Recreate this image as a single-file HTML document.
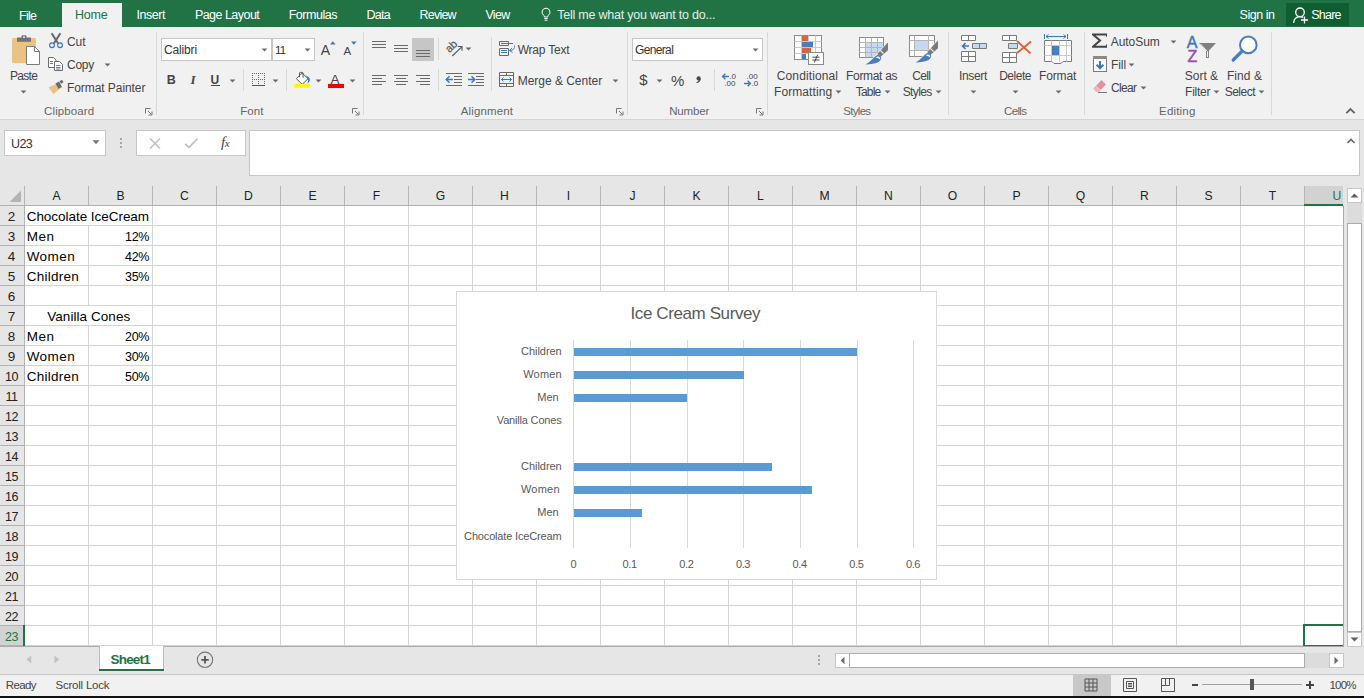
<!DOCTYPE html>
<html><head><meta charset="utf-8"><title>Excel</title>
<style>
*{box-sizing:border-box;margin:0;padding:0}
html,body{width:1364px;height:698px;overflow:hidden;background:#e6e6e6;font-family:"Liberation Sans",sans-serif;font-size:12px;color:#444}
.a{position:absolute}
.t{position:absolute;white-space:nowrap;line-height:14px;font-size:12px;color:#444}
#top{left:0;top:0;width:1364px;height:27px;background:#217346}
#top .t{color:#fff;font-size:12.5px;top:8px}
#ribbon{left:0;top:27px;width:1364px;height:92px;background:#f1f1f1}
#ribline{left:0;top:119px;width:1364px;height:1px;background:#d4d4d4}
.sep{position:absolute;top:32px;width:1px;height:83px;background:#d8d8d8}
.gl{position:absolute;top:104px;font-size:11.5px;color:#666;white-space:nowrap;line-height:14px}
.hc{position:absolute;top:186px;height:19px;line-height:19px;text-align:center;font-size:13.5px;color:#222;white-space:nowrap;transform:scaleX(.9)}
.rn{position:absolute;left:0;width:23px;height:20px;line-height:22px;text-align:center;font-size:13.5px;color:#222}
.c{position:absolute;font-size:13.5px;color:#000;white-space:nowrap;line-height:20px;height:20px}
.ax{position:absolute;font-size:11.5px;color:#595959;white-space:nowrap;line-height:14px}
.dd{position:absolute;width:0;height:0;border-left:3px solid transparent;border-right:3px solid transparent;border-top:3px solid #666}
</style></head><body>

<div class="a" id="top">
<div class="a" style="left:62px;top:3px;width:60px;height:24px;background:#f1f1f1"></div>
<div class="a" style="left:1286px;top:3px;width:63px;height:23px;background:#0f5d31"></div>
</div>
<div class="a" id="ribbon"></div><div class="a" id="ribline"></div>
<div class="sep" style="left:156px"></div>
<div class="sep" style="left:363px"></div>
<div class="sep" style="left:627px"></div>
<div class="sep" style="left:767px"></div>
<div class="sep" style="left:948px"></div>
<div class="sep" style="left:1084px"></div>
<div class="sep" style="left:1271px"></div>
<div class="t" style="left:44.1px;top:103px;font-size:11.5px;line-height:16px;letter-spacing:0.11px;color:#666;font-weight:normal;font-style:normal;">Clipboard</div>
<div class="t" style="left:240.3px;top:103px;font-size:11.5px;line-height:16px;letter-spacing:0.03px;color:#666;font-weight:normal;font-style:normal;">Font</div>
<div class="t" style="left:460.7px;top:103px;font-size:11.5px;line-height:16px;letter-spacing:0.14px;color:#666;font-weight:normal;font-style:normal;">Alignment</div>
<div class="t" style="left:669.2px;top:103px;font-size:11.5px;line-height:16px;letter-spacing:-0.14px;color:#666;font-weight:normal;font-style:normal;">Number</div>
<div class="t" style="left:843.2px;top:103px;font-size:11.5px;line-height:16px;letter-spacing:-0.68px;color:#666;font-weight:normal;font-style:normal;">Styles</div>
<div class="t" style="left:1004.1px;top:103px;font-size:11.5px;line-height:16px;letter-spacing:-0.69px;color:#666;font-weight:normal;font-style:normal;">Cells</div>
<div class="t" style="left:1159.1px;top:103px;font-size:11.5px;line-height:16px;letter-spacing:0.17px;color:#666;font-weight:normal;font-style:normal;">Editing</div>
<div class="t" style="left:19.0px;top:8px;font-size:12.5px;line-height:16px;letter-spacing:-0.75px;color:#fff;font-weight:normal;font-style:normal;">File</div>
<div class="t" style="left:75.0px;top:7px;font-size:12.5px;line-height:16px;letter-spacing:-0.21px;color:#217346;font-weight:normal;font-style:normal;">Home</div>
<div class="t" style="left:136.6px;top:7px;font-size:12.5px;line-height:16px;letter-spacing:-0.49px;color:#fff;font-weight:normal;font-style:normal;">Insert</div>
<div class="t" style="left:194.9px;top:7px;font-size:12.5px;line-height:16px;letter-spacing:-0.53px;color:#fff;font-weight:normal;font-style:normal;">Page Layout</div>
<div class="t" style="left:288.7px;top:7px;font-size:12.5px;line-height:16px;letter-spacing:-0.46px;color:#fff;font-weight:normal;font-style:normal;">Formulas</div>
<div class="t" style="left:366.6px;top:7px;font-size:12.5px;line-height:16px;letter-spacing:-0.80px;color:#fff;font-weight:normal;font-style:normal;">Data</div>
<div class="t" style="left:419.6px;top:7px;font-size:12.5px;line-height:16px;letter-spacing:-0.80px;color:#fff;font-weight:normal;font-style:normal;">Review</div>
<div class="t" style="left:485.4px;top:7px;font-size:12.5px;line-height:16px;letter-spacing:-0.66px;color:#fff;font-weight:normal;font-style:normal;">View</div>
<div class="t" style="left:557.2px;top:7px;font-size:12.5px;line-height:16px;letter-spacing:-0.22px;color:#e3efe8;font-weight:normal;font-style:normal;">Tell me what you want to do...</div>
<div class="t" style="left:1239.5px;top:7px;font-size:12.5px;line-height:16px;letter-spacing:-0.45px;color:#fff;font-weight:normal;font-style:normal;">Sign in</div>
<div class="t" style="left:1311.3px;top:7px;font-size:12.5px;line-height:16px;letter-spacing:-0.80px;color:#fff;font-weight:normal;font-style:normal;">Share</div>
<svg class="a" style="left:540px;top:7px" width="12" height="15" viewBox="0 0 12 15"><path d="M6 1.2a3.9 3.9 0 0 0-2.3 7.1c.5.5.7 1 .7 1.7h3.2c0-.7.2-1.2.7-1.7A3.9 3.9 0 0 0 6 1.200Z" fill="none" stroke="#fff" stroke-width="1"/><path d="M4.3 11.5h3.4M4.6 13.2h2.800" stroke="#fff" stroke-width="1"/></svg>
<svg class="a" style="left:1292px;top:5px" width="18" height="19" viewBox="0 0 18 19"><circle cx="8" cy="7.300" r="4.300" fill="none" stroke="#fff" stroke-width="1.300"/><path d="M1.600 18c.3-3.800 2.600-6.200 6.200-6.400c1.300 0 2.400.2 3.400.8" fill="none" stroke="#fff" stroke-width="1.300"/><path d="M12.500 11.500v7M9 15h7" stroke="#fff" stroke-width="1.300"/></svg>
<svg class="a" style="left:10px;top:33px" width="32" height="34" viewBox="0 0 32 34"><rect x="2" y="5" width="24" height="25" rx="1.5" fill="#eac282"/><path d="M7 4.500h4.500v-1.300a1 1 0 0 1 1-1h3a1 1 0 0 1 1 1v1.300H21v4.300H7Z" fill="#737373"/><rect x="13" y="3.400" width="2" height="1.300" fill="#f1f1f1"/><path d="M16.500 13.500h8l5 5v13h-13Z" fill="#fff" stroke="#7a7a7a" stroke-width="1"/><path d="M24.500 13.500v5h5" fill="none" stroke="#7a7a7a" stroke-width="1"/></svg>
<div class="t" style="left:10.0px;top:68px;font-size:12px;line-height:16px;letter-spacing:-0.72px;color:#444;font-weight:normal;font-style:normal;">Paste</div>
<svg class="a" style="left:20.0px;top:89.7px" width="7" height="4" viewBox="0 0 7 4"><path d="M0.600 0.400H6.400L3.500 3.500Z" fill="#6a6a6a"/></svg>
<svg class="a" style="left:48px;top:32px" width="16" height="17" viewBox="0 0 16 17"><path d="M3.600 1.200L10 11.200M12.400 1.200L6 11.200" stroke="#666" stroke-width="2" fill="none"/><circle cx="4" cy="13.200" r="2.400" fill="none" stroke="#3c78c0" stroke-width="1.200"/><circle cx="12" cy="13.200" r="2.400" fill="none" stroke="#3c78c0" stroke-width="1.200"/></svg>
<div class="t" style="left:67.0px;top:34px;font-size:12px;line-height:16px;letter-spacing:-0.09px;color:#444;font-weight:normal;font-style:normal;">Cut</div>
<svg class="a" style="left:47px;top:56px" width="17" height="16" viewBox="0 0 17 16"><path d="M1.500 1.500h5l2.500 2.500v7.500h-7.500Z" fill="#fff" stroke="#6a6a6a" stroke-width="1"/><path d="M3 5.500h3M3 7.500h3" stroke="#3c78c0" stroke-width="1"/><path d="M7.500 5.500h5l3 3v6h-8Z" fill="#fff" stroke="#6a6a6a" stroke-width="1"/><path d="M9 9.500h4.500M9 11.500h4.500M9 13h4.500" stroke="#3c78c0" stroke-width="0.900"/></svg>
<div class="t" style="left:67.0px;top:57px;font-size:12px;line-height:16px;letter-spacing:-0.27px;color:#444;font-weight:normal;font-style:normal;">Copy</div>
<svg class="a" style="left:104.0px;top:62.5px" width="7" height="4" viewBox="0 0 7 4"><path d="M0.600 0.400H6.400L3.500 3.500Z" fill="#6a6a6a"/></svg>
<svg class="a" style="left:47px;top:79px" width="18" height="16" viewBox="0 0 18 16"><path d="M1.500 8.500L9 5l3 5.500L6.500 15Z" fill="#eac282"/><path d="M8.500 4.500l3.500-2 3 5.500-3.500 2Z" fill="#6a6a6a"/><path d="M12.500 2.300l2.500-1.500 1.500 2.500-2.500 1.500Z" fill="#6a6a6a"/></svg>
<div class="t" style="left:67.0px;top:80px;font-size:12px;line-height:16px;letter-spacing:-0.07px;color:#444;font-weight:normal;font-style:normal;">Format Painter</div>
<svg class="a" style="left:145px;top:108px" width="8" height="8" viewBox="0 0 8 8"><path d="M0.5 5.5V0.5H5.5" fill="none" stroke="#777" stroke-width="1"/><path d="M3 3L6.5 6.5M7 3.5V7H3.5" fill="none" stroke="#777" stroke-width="1"/></svg>
<div class="a" style="left:161px;top:38px;width:111px;height:23px;background:#fff;border:1px solid #c6c6c6"></div>
<div class="a" style="left:272px;top:38px;width:43px;height:23px;background:#fff;border:1px solid #c6c6c6"></div>
<div class="t" style="left:164.0px;top:42px;font-size:12px;line-height:16px;letter-spacing:-0.15px;color:#333;font-weight:normal;font-style:normal;">Calibri</div>
<svg class="a" style="left:260.8px;top:47.5px" width="7" height="4" viewBox="0 0 7 4"><path d="M0.600 0.400H6.400L3.500 3.500Z" fill="#6a6a6a"/></svg>
<div class="t" style="left:275.0px;top:42px;font-size:11.5px;line-height:16px;letter-spacing:-0.80px;color:#333;font-weight:normal;font-style:normal;">11</div>
<svg class="a" style="left:303.9px;top:47.5px" width="7" height="4" viewBox="0 0 7 4"><path d="M0.600 0.400H6.400L3.500 3.500Z" fill="#6a6a6a"/></svg>
<div class="t" style="left:320.8px;top:41px;font-size:14px;line-height:18px;letter-spacing:0.00px;color:#444;font-weight:normal;font-style:normal;">A</div>
<svg class="a" style="left:330px;top:41px" width="6" height="4" viewBox="0 0 6 4"><path d="M0 3.500L2.800 0.300L5.600 3.500Z" fill="#3c78c0"/></svg>
<div class="t" style="left:343.5px;top:43px;font-size:11.5px;line-height:16px;letter-spacing:0.00px;color:#444;font-weight:normal;font-style:normal;">A</div>
<svg class="a" style="left:351px;top:41px" width="6" height="4" viewBox="0 0 6 4"><path d="M0 0.500H5.600L2.800 3.700Z" fill="#3c78c0"/></svg>
<div class="t" style="left:166.8px;top:72px;font-size:12.5px;line-height:16px;letter-spacing:0.00px;color:#444;font-weight:bold;font-style:normal;">B</div>
<div class="t" style="left:190.5px;top:71px;font-size:13px;line-height:17px;letter-spacing:0.00px;color:#444;font-weight:normal;font-style:italic;font-family:'Liberation Serif',serif;font-weight:bold;">I</div>
<div class="t" style="left:210.5px;top:72px;font-size:12px;line-height:16px;letter-spacing:0.00px;color:#444;font-weight:bold;font-style:normal;">U</div>
<div class="a" style="left:211px;top:85px;width:9px;height:1px;background:#444"></div>
<svg class="a" style="left:228.8px;top:78.5px" width="7" height="4" viewBox="0 0 7 4"><path d="M0.600 0.400H6.400L3.500 3.500Z" fill="#6a6a6a"/></svg>
<div class="a" style="left:243px;top:69px;width:1px;height:22px;background:#d8d8d8"></div>
<svg class="a" style="left:252px;top:72px" width="14" height="15" viewBox="0 0 14 15"><g fill="#666" shape-rendering="crispEdges"><rect x="0" y="1" width="1" height="1"/><rect x="0" y="3" width="1" height="1"/><rect x="0" y="5" width="1" height="1"/><rect x="0" y="7" width="1" height="1"/><rect x="0" y="9" width="1" height="1"/><rect x="0" y="11" width="1" height="1"/><rect x="2" y="1" width="1" height="1"/><rect x="2" y="7" width="1" height="1"/><rect x="4" y="1" width="1" height="1"/><rect x="4" y="7" width="1" height="1"/><rect x="6" y="1" width="1" height="1"/><rect x="6" y="3" width="1" height="1"/><rect x="6" y="5" width="1" height="1"/><rect x="6" y="7" width="1" height="1"/><rect x="6" y="9" width="1" height="1"/><rect x="6" y="11" width="1" height="1"/><rect x="8" y="1" width="1" height="1"/><rect x="8" y="7" width="1" height="1"/><rect x="10" y="1" width="1" height="1"/><rect x="10" y="7" width="1" height="1"/><rect x="12" y="1" width="1" height="1"/><rect x="12" y="3" width="1" height="1"/><rect x="12" y="5" width="1" height="1"/><rect x="12" y="7" width="1" height="1"/><rect x="12" y="9" width="1" height="1"/><rect x="12" y="11" width="1" height="1"/><rect x="0" y="13" width="13" height="1" fill="#555"/></g></svg>
<svg class="a" style="left:271.9px;top:78.5px" width="7" height="4" viewBox="0 0 7 4"><path d="M0.600 0.400H6.400L3.500 3.500Z" fill="#6a6a6a"/></svg>
<div class="a" style="left:286px;top:69px;width:1px;height:22px;background:#d8d8d8"></div>
<svg class="a" style="left:294px;top:71px" width="18" height="18" viewBox="0 0 18 18"><path d="M8.200 2L14 7.700L8.200 13.400L2.400 7.700Z" fill="#fff" stroke="#555" stroke-width="1"/><path d="M5.500 6.200V2.200a.8.8 0 0 1 .8-.8h1.900a.8.8 0 0 1 .8.8V6.800" fill="none" stroke="#555" stroke-width="1"/><path d="M12 4.600c2.800 1 4.200 2.800 3.800 4.600c-.2 1.200-1 2.400-2.400 3.400c.8-2.200.8-3.600.4-4.600Z" fill="#3c78c0"/><rect x="0" y="13" width="16" height="4" fill="#ffff00"/></svg>
<svg class="a" style="left:315.0px;top:78.5px" width="7" height="4" viewBox="0 0 7 4"><path d="M0.600 0.400H6.400L3.500 3.500Z" fill="#6a6a6a"/></svg>
<div class="t" style="left:330.5px;top:71px;font-size:13.5px;line-height:18px;letter-spacing:0.00px;color:#444;font-weight:normal;font-style:normal;">A</div>
<div class="a" style="left:328px;top:84px;width:16px;height:4px;background:#f00000"></div>
<svg class="a" style="left:349.0px;top:78.5px" width="7" height="4" viewBox="0 0 7 4"><path d="M0.600 0.400H6.400L3.500 3.500Z" fill="#6a6a6a"/></svg>
<svg class="a" style="left:352px;top:108px" width="8" height="8" viewBox="0 0 8 8"><path d="M0.5 5.5V0.5H5.5" fill="none" stroke="#777" stroke-width="1"/><path d="M3 3L6.5 6.5M7 3.5V7H3.5" fill="none" stroke="#777" stroke-width="1"/></svg>
<div class="a" style="left:412px;top:38px;width:22px;height:23px;background:#c6c6c6"></div>
<div class="a" style="left:372px;top:41px;width:14px;height:1px;background:#6a6a6a"></div>
<div class="a" style="left:372px;top:44px;width:14px;height:1px;background:#6a6a6a"></div>
<div class="a" style="left:372px;top:47px;width:14px;height:1px;background:#6a6a6a"></div>
<div class="a" style="left:394px;top:45px;width:14px;height:1px;background:#6a6a6a"></div>
<div class="a" style="left:394px;top:48px;width:14px;height:1px;background:#6a6a6a"></div>
<div class="a" style="left:394px;top:51px;width:14px;height:1px;background:#6a6a6a"></div>
<div class="a" style="left:416px;top:50px;width:14px;height:1px;background:#6a6a6a"></div>
<div class="a" style="left:416px;top:53px;width:14px;height:1px;background:#6a6a6a"></div>
<div class="a" style="left:416px;top:56px;width:14px;height:1px;background:#6a6a6a"></div>
<div class="a" style="left:438px;top:38px;width:1px;height:22px;background:#d8d8d8"></div>
<svg class="a" style="left:444px;top:38px" width="22" height="22" viewBox="0 0 22 22"><text x="0" y="0" transform="translate(5.500 15.300) rotate(-45)" font-family="Liberation Sans" font-size="11" fill="#555" stroke="#555" stroke-width="0.200">ab</text><path d="M8.300 18L17.800 8.800" stroke="#555" stroke-width="1.100" fill="none"/><path d="M13.800 8.500H18V12.700" stroke="#555" stroke-width="1.100" fill="none"/></svg>
<svg class="a" style="left:464.9px;top:47.0px" width="7" height="4" viewBox="0 0 7 4"><path d="M0.600 0.400H6.400L3.500 3.500Z" fill="#6a6a6a"/></svg>
<div class="a" style="left:491px;top:37px;width:1px;height:54px;background:#d8d8d8"></div>
<div class="a" style="left:372px;top:75px;width:14px;height:1px;background:#6a6a6a"></div>
<div class="a" style="left:394px;top:75px;width:14px;height:1px;background:#6a6a6a"></div>
<div class="a" style="left:416px;top:75px;width:14px;height:1px;background:#6a6a6a"></div>
<div class="a" style="left:372px;top:78px;width:10px;height:1px;background:#6a6a6a"></div>
<div class="a" style="left:396px;top:78px;width:10px;height:1px;background:#6a6a6a"></div>
<div class="a" style="left:420px;top:78px;width:10px;height:1px;background:#6a6a6a"></div>
<div class="a" style="left:372px;top:81px;width:14px;height:1px;background:#6a6a6a"></div>
<div class="a" style="left:394px;top:81px;width:14px;height:1px;background:#6a6a6a"></div>
<div class="a" style="left:416px;top:81px;width:14px;height:1px;background:#6a6a6a"></div>
<div class="a" style="left:372px;top:84px;width:10px;height:1px;background:#6a6a6a"></div>
<div class="a" style="left:396px;top:84px;width:10px;height:1px;background:#6a6a6a"></div>
<div class="a" style="left:420px;top:84px;width:10px;height:1px;background:#6a6a6a"></div>
<div class="a" style="left:438px;top:69px;width:1px;height:22px;background:#d8d8d8"></div>
<div class="a" style="left:446px;top:73px;width:16px;height:1px;background:#6a6a6a"></div>
<div class="a" style="left:446px;top:85px;width:16px;height:1px;background:#6a6a6a"></div>
<div class="a" style="left:454px;top:76px;width:8px;height:1px;background:#6a6a6a"></div>
<div class="a" style="left:454px;top:79px;width:8px;height:1px;background:#6a6a6a"></div>
<div class="a" style="left:454px;top:82px;width:8px;height:1px;background:#6a6a6a"></div>
<div class="a" style="left:468px;top:73px;width:16px;height:1px;background:#6a6a6a"></div>
<div class="a" style="left:468px;top:85px;width:16px;height:1px;background:#6a6a6a"></div>
<div class="a" style="left:476px;top:76px;width:8px;height:1px;background:#6a6a6a"></div>
<div class="a" style="left:476px;top:79px;width:8px;height:1px;background:#6a6a6a"></div>
<div class="a" style="left:476px;top:82px;width:8px;height:1px;background:#6a6a6a"></div>
<svg class="a" style="left:445px;top:75px" width="9" height="9" viewBox="0 0 9 9"><path d="M8 4.500H1.500M4.500 1.200L1.200 4.500L4.500 7.800" stroke="#3c78c0" stroke-width="1.500" fill="none"/></svg>
<svg class="a" style="left:467px;top:75px" width="9" height="9" viewBox="0 0 9 9"><path d="M1 4.500H7.500M4.500 1.200L7.800 4.500L4.500 7.800" stroke="#3c78c0" stroke-width="1.500" fill="none"/></svg>
<svg class="a" style="left:498px;top:40px" width="18" height="17" viewBox="0 0 18 17"><path d="M1.500 1.500H10.500V5.500H1.500ZM1.500 8.500H10.500V15.500H1.500Z" fill="none" stroke="#6a6a6a" stroke-width="1"/><path d="M3 3.500H15M3 10.500H9M3 12.500H9" stroke="#3c78c0" stroke-width="1"/><path d="M16.500 5.500c.5 3-1.500 5-4.500 5M14 8L11.500 10.500L14.500 12.500" fill="none" stroke="#3c78c0" stroke-width="1"/></svg>
<div class="t" style="left:517.7px;top:42px;font-size:12px;line-height:16px;letter-spacing:-0.22px;color:#444;font-weight:normal;font-style:normal;">Wrap Text</div>
<svg class="a" style="left:498px;top:71px" width="17" height="17" viewBox="0 0 17 17"><path d="M1.500 1.500H15.500V15.500H1.500ZM1.500 4.500H15.500M1.500 12.500H15.500M8.500 1.500V4.500M8.500 12.500V15.500" fill="none" stroke="#6a6a6a" stroke-width="1"/><path d="M3.500 8.500H13.500M5.500 6.500L3.500 8.500L5.500 10.500M11.500 6.500L13.500 8.500L11.500 10.500" fill="none" stroke="#3c78c0" stroke-width="1"/></svg>
<div class="t" style="left:517.7px;top:73px;font-size:12px;line-height:16px;letter-spacing:-0.02px;color:#444;font-weight:normal;font-style:normal;">Merge &amp; Center</div>
<svg class="a" style="left:612.0px;top:78.5px" width="7" height="4" viewBox="0 0 7 4"><path d="M0.600 0.400H6.400L3.500 3.500Z" fill="#6a6a6a"/></svg>
<svg class="a" style="left:616px;top:108px" width="8" height="8" viewBox="0 0 8 8"><path d="M0.5 5.5V0.5H5.5" fill="none" stroke="#777" stroke-width="1"/><path d="M3 3L6.5 6.5M7 3.5V7H3.5" fill="none" stroke="#777" stroke-width="1"/></svg>
<div class="a" style="left:632px;top:38px;width:131px;height:23px;background:#fff;border:1px solid #c6c6c6"></div>
<div class="t" style="left:635.0px;top:42px;font-size:12px;line-height:16px;letter-spacing:-0.65px;color:#333;font-weight:normal;font-style:normal;">General</div>
<svg class="a" style="left:751.9px;top:47.5px" width="7" height="4" viewBox="0 0 7 4"><path d="M0.600 0.400H6.400L3.500 3.500Z" fill="#6a6a6a"/></svg>
<div class="t" style="left:639.3px;top:70px;font-size:15px;line-height:19px;letter-spacing:0.00px;color:#444;font-weight:normal;font-style:normal;">$</div>
<svg class="a" style="left:656.0px;top:78.5px" width="7" height="4" viewBox="0 0 7 4"><path d="M0.600 0.400H6.400L3.500 3.500Z" fill="#6a6a6a"/></svg>
<div class="t" style="left:670.9px;top:71px;font-size:15px;line-height:19px;letter-spacing:0.00px;color:#444;font-weight:normal;font-style:normal;">%</div>
<svg class="a" style="left:695px;top:75px" width="7" height="9" viewBox="0 0 7 9"><circle cx="3.600" cy="3.400" r="2.100" fill="#4a4a4a"/><path d="M5.700 3.200c.3 2.600-1.500 4.300-3.900 5l-.4-.9c1.500-.6 2.400-1.500 2.300-2.600Z" fill="#4a4a4a"/></svg>
<div class="a" style="left:714px;top:69px;width:1px;height:22px;background:#d8d8d8"></div>
<svg class="a" style="left:721px;top:72px" width="16" height="16" viewBox="0 0 16 16"><path d="M8 4.500H1.800M4.300 1.800L1.600 4.500L4.300 7.200" fill="none" stroke="#3c78c0" stroke-width="1.400"/><text x="8.300" y="7" font-family="Liberation Sans" font-size="8" fill="#444">.0</text><text x="3.300" y="14" font-family="Liberation Sans" font-size="8" fill="#444">.00</text></svg>
<svg class="a" style="left:743px;top:72px" width="16" height="16" viewBox="0 0 16 16"><text x="3.600" y="7" font-family="Liberation Sans" font-size="8" fill="#444">.00</text><path d="M1 11.500H7.200M4.700 8.800L7.400 11.500L4.700 14.200" fill="none" stroke="#3c78c0" stroke-width="1.400"/><text x="8.600" y="14" font-family="Liberation Sans" font-size="8" fill="#444">.0</text></svg>
<svg class="a" style="left:756px;top:108px" width="8" height="8" viewBox="0 0 8 8"><path d="M0.5 5.5V0.5H5.5" fill="none" stroke="#777" stroke-width="1"/><path d="M3 3L6.5 6.5M7 3.5V7H3.5" fill="none" stroke="#777" stroke-width="1"/></svg>
<svg class="a" style="left:793px;top:34px" width="32" height="32" viewBox="0 0 32 32"><rect x="1.500" y="1.500" width="27" height="24" fill="#fff" stroke="#8a8a8a"/><path d="M1.500 7.500H28.500M1.500 13.500H28.500M1.500 19.500H28.500M8.500 1.500V25.500M15.500 1.500V25.500M22.500 1.500V25.500" stroke="#c8c8c8" fill="none"/><rect x="9" y="2" width="6" height="5" fill="#d9623f"/><rect x="9" y="8" width="11" height="5" fill="#4a7ebb"/><rect x="9" y="14" width="9" height="5" fill="#d9623f"/><rect x="9" y="20" width="4" height="5" fill="#4a7ebb"/><rect x="15.500" y="18.500" width="15" height="12" fill="#fff" stroke="#8a8a8a"/><path d="M19.500 23.200H26.500M19.500 26H26.500M24.700 20.700L21.300 28.500" stroke="#444" stroke-width="1" fill="none"/></svg>
<div class="t" style="left:776.8px;top:68px;font-size:12px;line-height:16px;letter-spacing:0.11px;color:#444;font-weight:normal;font-style:normal;">Conditional</div>
<div class="t" style="left:774.0px;top:84px;font-size:12px;line-height:16px;letter-spacing:0.08px;color:#444;font-weight:normal;font-style:normal;">Formatting</div>
<svg class="a" style="left:834.9px;top:89.5px" width="7" height="4" viewBox="0 0 7 4"><path d="M0.600 0.400H6.400L3.500 3.500Z" fill="#6a6a6a"/></svg>
<svg class="a" style="left:858px;top:34px" width="32" height="32" viewBox="0 0 32 32"><rect x="1.500" y="3.500" width="24" height="20" fill="#fff" stroke="#8a8a8a"/><rect x="8" y="9" width="17" height="14" fill="#c5d9f1"/><path d="M1.500 8.500H25.500M1.500 13.500H25.500M1.500 18.500H25.500M7.500 3.500V23.500M13.500 3.500V23.500M19.500 3.500V23.500" stroke="#b4b4b4" fill="none"/><path d="M28 11.500V26H12.500Z" fill="#f1f1f1"/><path d="M30 8.5V16.2L22.600 22.8L19.200 20.0Z" fill="#7a7a7a" stroke="#f1f1f1" stroke-width="1.200"/><path d="M19.300 21.0c2.600-.4 4.200 1.400 3.800 3.600c-.6 3.200-4.400 5.600-15.600 6c4.800-2.400 7.400-6.800 11.800-9.600Z" fill="#4a7ebb" stroke="#f1f1f1" stroke-width="1.200"/><path d="M30 8.5V16.2L22.600 22.8L19.200 20.0Z" fill="#7a7a7a"/><path d="M19.300 21.0c2.600-.4 4.200 1.400 3.800 3.600c-.6 3.200-4.400 5.600-15.600 6c4.800-2.400 7.400-6.800 11.800-9.600Z" fill="#4a7ebb"/><path d="M22.300 16.3L25.600 19.7" stroke="#f1f1f1" stroke-width="1.200"/><path d="M18.500 23.6c1.600-1 3.200-.2 3 1.600" stroke="#fff" stroke-width="1.500" fill="none"/></svg>
<div class="t" style="left:846.0px;top:68px;font-size:12px;line-height:16px;letter-spacing:-0.31px;color:#444;font-weight:normal;font-style:normal;">Format as</div>
<div class="t" style="left:855.7px;top:84px;font-size:12px;line-height:16px;letter-spacing:-0.80px;color:#444;font-weight:normal;font-style:normal;">Table</div>
<svg class="a" style="left:883.8px;top:89.5px" width="7" height="4" viewBox="0 0 7 4"><path d="M0.600 0.400H6.400L3.500 3.500Z" fill="#6a6a6a"/></svg>
<svg class="a" style="left:908px;top:33px" width="32" height="32" viewBox="0 0 32 32"><rect x="1.500" y="2.500" width="25" height="21" fill="#fff" stroke="#8a8a8a"/><path d="M1.500 7.500H26.500M1.500 17.500H26.500M6.500 2.500V23.500M20.500 2.500V23.500" stroke="#b4b4b4" fill="none"/><rect x="7" y="8" width="13" height="9" fill="#c5d9f1"/><path d="M29 10.500V25H13.500Z" fill="#f1f1f1"/><path d="M30 7.5V15.2L22.600 21.8L19.200 19.0Z" fill="#7a7a7a" stroke="#f1f1f1" stroke-width="1.200"/><path d="M19.300 20.0c2.600-.4 4.200 1.400 3.800 3.600c-.6 3.200-4.400 5.600-15.600 6c4.800-2.400 7.400-6.800 11.800-9.600Z" fill="#4a7ebb" stroke="#f1f1f1" stroke-width="1.200"/><path d="M30 7.5V15.2L22.600 21.8L19.200 19.0Z" fill="#7a7a7a"/><path d="M19.300 20.0c2.600-.4 4.200 1.400 3.800 3.600c-.6 3.200-4.400 5.600-15.600 6c4.800-2.400 7.400-6.800 11.800-9.600Z" fill="#4a7ebb"/><path d="M22.300 15.3L25.600 18.7" stroke="#f1f1f1" stroke-width="1.200"/><path d="M18.500 22.6c1.600-1 3.200-.2 3 1.600" stroke="#fff" stroke-width="1.500" fill="none"/></svg>
<div class="t" style="left:912.2px;top:68px;font-size:12px;line-height:16px;letter-spacing:-0.62px;color:#444;font-weight:normal;font-style:normal;">Cell</div>
<div class="t" style="left:902.7px;top:84px;font-size:12px;line-height:16px;letter-spacing:-0.62px;color:#444;font-weight:normal;font-style:normal;">Styles</div>
<svg class="a" style="left:935.2px;top:89.5px" width="7" height="4" viewBox="0 0 7 4"><path d="M0.600 0.400H6.400L3.500 3.500Z" fill="#6a6a6a"/></svg>
<svg class="a" style="left:960px;top:34px" width="30" height="30" viewBox="0 0 30 30"><path d="M1.500 1.500H15.500V6.500H1.500ZM8.500 1.500V6.500" fill="#fff" stroke="#7a7a7a"/><path d="M12.500 9.500H26.500V14.500H12.500Z" fill="#c5d9f1" stroke="#7a7a7a"/><path d="M19.500 9.500V14.500" stroke="#7a7a7a"/><path d="M1.500 17.500H15.500V27.500H1.500ZM8.500 17.500V27.500M1.500 22.500H15.500" fill="#fff" stroke="#7a7a7a"/><path d="M9 12H2.500M5.500 9L2.500 12L5.500 15" fill="none" stroke="#3c78c0" stroke-width="1.600"/></svg>
<div class="t" style="left:959.0px;top:68px;font-size:12px;line-height:16px;letter-spacing:-0.34px;color:#444;font-weight:normal;font-style:normal;">Insert</div>
<svg class="a" style="left:970.1px;top:89.7px" width="7" height="4" viewBox="0 0 7 4"><path d="M0.600 0.400H6.400L3.500 3.500Z" fill="#6a6a6a"/></svg>
<svg class="a" style="left:1001px;top:34px" width="32" height="30" viewBox="0 0 32 30"><path d="M1.500 1.500H15.500V6.500H1.500ZM8.500 1.500V6.500" fill="#fff" stroke="#7a7a7a"/><path d="M7.500 9.500H16.500V14.500H7.500Z" fill="#c5d9f1" stroke="#7a7a7a"/><path d="M1.500 18.500H15.500V28.500H1.500ZM8.500 18.500V28.500M1.500 23.500H15.500" fill="#fff" stroke="#7a7a7a"/><path d="M16 7L29.500 19.500M30 7.500L16 19" fill="none" stroke="#d9623f" stroke-width="1.800"/></svg>
<div class="t" style="left:999.2px;top:68px;font-size:12px;line-height:16px;letter-spacing:-0.48px;color:#444;font-weight:normal;font-style:normal;">Delete</div>
<svg class="a" style="left:1012.0px;top:89.7px" width="7" height="4" viewBox="0 0 7 4"><path d="M0.600 0.400H6.400L3.500 3.500Z" fill="#6a6a6a"/></svg>
<svg class="a" style="left:1043px;top:33px" width="30" height="32" viewBox="0 0 30 32"><path d="M1.500 1V6M24.500 1V6M3 3.500H23M5.500 1.500L3 3.500L5.500 5.500M20.500 1.500L23 3.500L20.500 5.500" fill="none" stroke="#3c78c0" stroke-width="1"/><path d="M1.500 7.500H28.500V28.500H20L18 30.500H11L9 28.500H1.500Z" fill="#fff" stroke="#7a7a7a"/><path d="M1.500 12.500H28.500M1.500 22.500H28.500M8.500 7.500V28.500M16.500 7.500V28.500M23.500 7.500V28.500" fill="none" stroke="#c8c8c8"/><rect x="9" y="13" width="7" height="9" fill="#4a7ebb"/></svg>
<div class="t" style="left:1039.1px;top:68px;font-size:12px;line-height:16px;letter-spacing:-0.16px;color:#444;font-weight:normal;font-style:normal;">Format</div>
<svg class="a" style="left:1054.9px;top:89.7px" width="7" height="4" viewBox="0 0 7 4"><path d="M0.600 0.400H6.400L3.500 3.500Z" fill="#6a6a6a"/></svg>
<svg class="a" style="left:1091px;top:32px" width="17" height="17" viewBox="0 0 17 17"><path d="M1 1.500H16V4.800H15V3.500H4.600L10.600 8.600L4.600 13.700H15V12.400H16V15.700H1V14.200L7.500 8.600L1 3Z" fill="#444"/></svg>
<div class="t" style="left:1110.7px;top:34px;font-size:12px;line-height:16px;letter-spacing:-0.03px;color:#444;font-weight:normal;font-style:normal;">AutoSum</div>
<svg class="a" style="left:1169.9px;top:39.5px" width="7" height="4" viewBox="0 0 7 4"><path d="M0.600 0.400H6.400L3.500 3.500Z" fill="#6a6a6a"/></svg>
<svg class="a" style="left:1092px;top:55px" width="16" height="18" viewBox="0 0 16 18"><rect x="1.500" y="1.500" width="13" height="15" fill="#fff" stroke="#7a7a7a"/><rect x="1" y="1" width="14" height="3" fill="#8a8a8a"/><path d="M8 6V13M4.600 9.800L8 13.200L11.400 9.800" fill="none" stroke="#3c78c0" stroke-width="2.100"/></svg>
<div class="t" style="left:1111.0px;top:57px;font-size:12px;line-height:16px;letter-spacing:-0.08px;color:#444;font-weight:normal;font-style:normal;">Fill</div>
<svg class="a" style="left:1127.8px;top:62.5px" width="7" height="4" viewBox="0 0 7 4"><path d="M0.600 0.400H6.400L3.500 3.500Z" fill="#6a6a6a"/></svg>
<svg class="a" style="left:1092px;top:79px" width="16" height="15" viewBox="0 0 16 15"><path d="M9.500 1L14 5.500L7 12.500H4L1.500 9.500Z" fill="#e8909c"/><path d="M1.500 9.500L4.500 6.500L9 11L7 12.800H4Z" fill="#f4b7be"/><path d="M6 13.500H15" stroke="#777" stroke-width="1"/></svg>
<div class="t" style="left:1111.0px;top:80px;font-size:12px;line-height:16px;letter-spacing:-0.64px;color:#444;font-weight:normal;font-style:normal;">Clear</div>
<svg class="a" style="left:1139.8px;top:85.5px" width="7" height="4" viewBox="0 0 7 4"><path d="M0.600 0.400H6.400L3.500 3.500Z" fill="#6a6a6a"/></svg>
<div class="t" style="left:1186.7px;top:33px;font-size:16px;line-height:20px;letter-spacing:0.00px;color:#3c78c0;font-weight:normal;font-style:normal;-webkit-text-stroke:0.5px #3c78c0;">A</div>
<div class="t" style="left:1187.4px;top:47px;font-size:16px;line-height:20px;letter-spacing:0.00px;color:#9b4fb0;font-weight:normal;font-style:normal;-webkit-text-stroke:0.5px #9b4fb0;">Z</div>
<svg class="a" style="left:1198px;top:42px" width="19" height="17" viewBox="0 0 19 17"><path d="M1 1H18L11 8.500V16H8V8.500Z" fill="#808080"/><path d="M9 9.500V15H10V9.500Z" fill="#f1f1f1"/><path d="M2.500 2L9.300 9.300" stroke="#f1f1f1" stroke-width="1"/></svg>
<div class="t" style="left:1184.8px;top:68px;font-size:12px;line-height:16px;letter-spacing:-0.01px;color:#444;font-weight:normal;font-style:normal;">Sort &amp;</div>
<div class="t" style="left:1185.1px;top:84px;font-size:12px;line-height:16px;letter-spacing:-0.25px;color:#444;font-weight:normal;font-style:normal;">Filter</div>
<svg class="a" style="left:1212.9px;top:89.5px" width="7" height="4" viewBox="0 0 7 4"><path d="M0.600 0.400H6.400L3.500 3.500Z" fill="#6a6a6a"/></svg>
<svg class="a" style="left:1229px;top:33px" width="32" height="32" viewBox="0 0 32 32"><circle cx="19.300" cy="11.900" r="8.300" fill="#fff" stroke="#4a7ebb" stroke-width="2"/><path d="M13.200 18L4.200 27" stroke="#4a7ebb" stroke-width="3.200" stroke-linecap="round"/></svg>
<div class="t" style="left:1226.9px;top:68px;font-size:12px;line-height:16px;letter-spacing:0.10px;color:#444;font-weight:normal;font-style:normal;">Find &amp;</div>
<div class="t" style="left:1224.7px;top:84px;font-size:12px;line-height:16px;letter-spacing:-0.51px;color:#444;font-weight:normal;font-style:normal;">Select</div>
<svg class="a" style="left:1258.0px;top:89.5px" width="7" height="4" viewBox="0 0 7 4"><path d="M0.600 0.400H6.400L3.500 3.500Z" fill="#6a6a6a"/></svg>
<svg class="a" style="left:1345px;top:106px" width="12" height="9" viewBox="0 0 12 9"><path d="M1.300 7.200L5.500 3L9.700 7.200" fill="none" stroke="#666" stroke-width="1.900"/></svg>
<div class="a" style="left:4px;top:130px;width:102px;height:26px;background:#fff;border:1px solid #c6c6c6"></div>
<div class="t" style="left:11.0px;top:136px;font-size:12.5px;line-height:16px;letter-spacing:-0.56px;color:#333;font-weight:normal;font-style:normal;">U23</div>
<svg class="a" style="left:92px;top:140px" width="8" height="5" viewBox="0 0 8 5"><path d="M0.500 0.300H7.500L4 4.200Z" fill="#777"/></svg>
<div class="a" style="left:120px;top:138px;width:2px;height:2px;background:#a6a6a6;box-shadow:0 4px 0 #a6a6a6,0 8px 0 #a6a6a6"></div>
<div class="a" style="left:136px;top:130px;width:110px;height:26px;background:#fff;border:1px solid #c6c6c6"></div>
<svg class="a" style="left:149px;top:138px" width="12" height="11" viewBox="0 0 12 11"><path d="M1 0.500L11 10.500M11 0.500L1 10.500" stroke="#c0c0c0" stroke-width="1.500" fill="none"/></svg>
<svg class="a" style="left:184px;top:137px" width="15" height="12" viewBox="0 0 15 12"><path d="M1.200 6.800L5 10.500L13.500 1.500" stroke="#c0c0c0" stroke-width="1.800" fill="none"/></svg>
<div class="t" style="left:221px;top:133px;font-family:'Liberation Serif',serif;font-style:italic;font-size:15px;line-height:18px;color:#444;letter-spacing:-0.5px">f<span style="font-size:11px">x</span></div>
<div class="a" style="left:249px;top:130px;width:1111px;height:46px;background:#fff;border:1px solid #c6c6c6"></div>
<svg class="a" style="left:1346px;top:137px" width="10" height="8" viewBox="0 0 10 8"><path d="M1.500 6L5 2.500L8.500 6" fill="none" stroke="#666" stroke-width="1.600"/></svg>
<!--FBAR-->
<div class="a" style="left:0;top:186px;width:1344px;height:20px;background:#e6e6e6"></div>
<div class="a" style="left:25px;top:206px;width:1319px;height:440px;background:#fff"></div>
<div class="a" style="left:0;top:206px;width:24px;height:440px;background:#e6e6e6"></div>
<div class="a" style="left:1305px;top:186px;width:38px;height:18px;background:#d2d2d2"></div>
<div class="a" style="left:1304px;top:204px;width:39px;height:2px;background:#217346"></div>
<div class="a" style="left:0;top:626px;width:23px;height:20px;background:#d2d2d2"></div>
<div class="a" style="left:23px;top:625px;width:2px;height:21px;background:#217346"></div>
<div class="a" style="left:24px;top:206px;width:1px;height:440px;background:#d4d4d4"></div>
<div class="a" style="left:24px;top:186px;width:1px;height:20px;background:#b6b6b6"></div>
<div class="a" style="left:88px;top:206px;width:1px;height:440px;background:#d4d4d4"></div>
<div class="a" style="left:88px;top:186px;width:1px;height:20px;background:#b6b6b6"></div>
<div class="a" style="left:152px;top:206px;width:1px;height:440px;background:#d4d4d4"></div>
<div class="a" style="left:152px;top:186px;width:1px;height:20px;background:#b6b6b6"></div>
<div class="a" style="left:216px;top:206px;width:1px;height:440px;background:#d4d4d4"></div>
<div class="a" style="left:216px;top:186px;width:1px;height:20px;background:#b6b6b6"></div>
<div class="a" style="left:280px;top:206px;width:1px;height:440px;background:#d4d4d4"></div>
<div class="a" style="left:280px;top:186px;width:1px;height:20px;background:#b6b6b6"></div>
<div class="a" style="left:344px;top:206px;width:1px;height:440px;background:#d4d4d4"></div>
<div class="a" style="left:344px;top:186px;width:1px;height:20px;background:#b6b6b6"></div>
<div class="a" style="left:408px;top:206px;width:1px;height:440px;background:#d4d4d4"></div>
<div class="a" style="left:408px;top:186px;width:1px;height:20px;background:#b6b6b6"></div>
<div class="a" style="left:472px;top:206px;width:1px;height:440px;background:#d4d4d4"></div>
<div class="a" style="left:472px;top:186px;width:1px;height:20px;background:#b6b6b6"></div>
<div class="a" style="left:536px;top:206px;width:1px;height:440px;background:#d4d4d4"></div>
<div class="a" style="left:536px;top:186px;width:1px;height:20px;background:#b6b6b6"></div>
<div class="a" style="left:600px;top:206px;width:1px;height:440px;background:#d4d4d4"></div>
<div class="a" style="left:600px;top:186px;width:1px;height:20px;background:#b6b6b6"></div>
<div class="a" style="left:664px;top:206px;width:1px;height:440px;background:#d4d4d4"></div>
<div class="a" style="left:664px;top:186px;width:1px;height:20px;background:#b6b6b6"></div>
<div class="a" style="left:728px;top:206px;width:1px;height:440px;background:#d4d4d4"></div>
<div class="a" style="left:728px;top:186px;width:1px;height:20px;background:#b6b6b6"></div>
<div class="a" style="left:792px;top:206px;width:1px;height:440px;background:#d4d4d4"></div>
<div class="a" style="left:792px;top:186px;width:1px;height:20px;background:#b6b6b6"></div>
<div class="a" style="left:856px;top:206px;width:1px;height:440px;background:#d4d4d4"></div>
<div class="a" style="left:856px;top:186px;width:1px;height:20px;background:#b6b6b6"></div>
<div class="a" style="left:920px;top:206px;width:1px;height:440px;background:#d4d4d4"></div>
<div class="a" style="left:920px;top:186px;width:1px;height:20px;background:#b6b6b6"></div>
<div class="a" style="left:984px;top:206px;width:1px;height:440px;background:#d4d4d4"></div>
<div class="a" style="left:984px;top:186px;width:1px;height:20px;background:#b6b6b6"></div>
<div class="a" style="left:1048px;top:206px;width:1px;height:440px;background:#d4d4d4"></div>
<div class="a" style="left:1048px;top:186px;width:1px;height:20px;background:#b6b6b6"></div>
<div class="a" style="left:1112px;top:206px;width:1px;height:440px;background:#d4d4d4"></div>
<div class="a" style="left:1112px;top:186px;width:1px;height:20px;background:#b6b6b6"></div>
<div class="a" style="left:1176px;top:206px;width:1px;height:440px;background:#d4d4d4"></div>
<div class="a" style="left:1176px;top:186px;width:1px;height:20px;background:#b6b6b6"></div>
<div class="a" style="left:1240px;top:206px;width:1px;height:440px;background:#d4d4d4"></div>
<div class="a" style="left:1240px;top:186px;width:1px;height:20px;background:#b6b6b6"></div>
<div class="a" style="left:1304px;top:206px;width:1px;height:440px;background:#d4d4d4"></div>
<div class="a" style="left:1304px;top:186px;width:1px;height:20px;background:#b6b6b6"></div>
<div class="a" style="left:24px;top:206px;width:1px;height:440px;background:#b1b1b1"></div>
<div class="a" style="left:25px;top:205px;width:1319px;height:1px;background:#d4d4d4"></div>
<div class="a" style="left:0;top:205px;width:24px;height:1px;background:#b1b1b1"></div>
<div class="a" style="left:25px;top:225px;width:1319px;height:1px;background:#d4d4d4"></div>
<div class="a" style="left:0;top:225px;width:24px;height:1px;background:#b1b1b1"></div>
<div class="a" style="left:25px;top:245px;width:1319px;height:1px;background:#d4d4d4"></div>
<div class="a" style="left:0;top:245px;width:24px;height:1px;background:#b1b1b1"></div>
<div class="a" style="left:25px;top:265px;width:1319px;height:1px;background:#d4d4d4"></div>
<div class="a" style="left:0;top:265px;width:24px;height:1px;background:#b1b1b1"></div>
<div class="a" style="left:25px;top:285px;width:1319px;height:1px;background:#d4d4d4"></div>
<div class="a" style="left:0;top:285px;width:24px;height:1px;background:#b1b1b1"></div>
<div class="a" style="left:25px;top:305px;width:1319px;height:1px;background:#d4d4d4"></div>
<div class="a" style="left:0;top:305px;width:24px;height:1px;background:#b1b1b1"></div>
<div class="a" style="left:25px;top:325px;width:1319px;height:1px;background:#d4d4d4"></div>
<div class="a" style="left:0;top:325px;width:24px;height:1px;background:#b1b1b1"></div>
<div class="a" style="left:25px;top:345px;width:1319px;height:1px;background:#d4d4d4"></div>
<div class="a" style="left:0;top:345px;width:24px;height:1px;background:#b1b1b1"></div>
<div class="a" style="left:25px;top:365px;width:1319px;height:1px;background:#d4d4d4"></div>
<div class="a" style="left:0;top:365px;width:24px;height:1px;background:#b1b1b1"></div>
<div class="a" style="left:25px;top:385px;width:1319px;height:1px;background:#d4d4d4"></div>
<div class="a" style="left:0;top:385px;width:24px;height:1px;background:#b1b1b1"></div>
<div class="a" style="left:25px;top:405px;width:1319px;height:1px;background:#d4d4d4"></div>
<div class="a" style="left:0;top:405px;width:24px;height:1px;background:#b1b1b1"></div>
<div class="a" style="left:25px;top:425px;width:1319px;height:1px;background:#d4d4d4"></div>
<div class="a" style="left:0;top:425px;width:24px;height:1px;background:#b1b1b1"></div>
<div class="a" style="left:25px;top:445px;width:1319px;height:1px;background:#d4d4d4"></div>
<div class="a" style="left:0;top:445px;width:24px;height:1px;background:#b1b1b1"></div>
<div class="a" style="left:25px;top:465px;width:1319px;height:1px;background:#d4d4d4"></div>
<div class="a" style="left:0;top:465px;width:24px;height:1px;background:#b1b1b1"></div>
<div class="a" style="left:25px;top:485px;width:1319px;height:1px;background:#d4d4d4"></div>
<div class="a" style="left:0;top:485px;width:24px;height:1px;background:#b1b1b1"></div>
<div class="a" style="left:25px;top:505px;width:1319px;height:1px;background:#d4d4d4"></div>
<div class="a" style="left:0;top:505px;width:24px;height:1px;background:#b1b1b1"></div>
<div class="a" style="left:25px;top:525px;width:1319px;height:1px;background:#d4d4d4"></div>
<div class="a" style="left:0;top:525px;width:24px;height:1px;background:#b1b1b1"></div>
<div class="a" style="left:25px;top:545px;width:1319px;height:1px;background:#d4d4d4"></div>
<div class="a" style="left:0;top:545px;width:24px;height:1px;background:#b1b1b1"></div>
<div class="a" style="left:25px;top:565px;width:1319px;height:1px;background:#d4d4d4"></div>
<div class="a" style="left:0;top:565px;width:24px;height:1px;background:#b1b1b1"></div>
<div class="a" style="left:25px;top:585px;width:1319px;height:1px;background:#d4d4d4"></div>
<div class="a" style="left:0;top:585px;width:24px;height:1px;background:#b1b1b1"></div>
<div class="a" style="left:25px;top:605px;width:1319px;height:1px;background:#d4d4d4"></div>
<div class="a" style="left:0;top:605px;width:24px;height:1px;background:#b1b1b1"></div>
<div class="a" style="left:25px;top:625px;width:1319px;height:1px;background:#d4d4d4"></div>
<div class="a" style="left:0;top:625px;width:24px;height:1px;background:#b1b1b1"></div>
<div class="a" style="left:25px;top:645px;width:1319px;height:1px;background:#d4d4d4"></div>
<div class="a" style="left:0;top:645px;width:24px;height:1px;background:#b1b1b1"></div>
<div class="a" style="left:0;top:205px;width:1344px;height:1px;background:#b1b1b1"></div>
<div class="a" style="left:1304px;top:204px;width:39px;height:2px;background:#217346"></div>
<div class="a" style="left:23px;top:625px;width:2px;height:21px;background:#217346"></div>
<div class="hc" style="left:25px;width:63px;color:#222">A</div>
<div class="hc" style="left:89px;width:63px;color:#222">B</div>
<div class="hc" style="left:153px;width:63px;color:#222">C</div>
<div class="hc" style="left:217px;width:63px;color:#222">D</div>
<div class="hc" style="left:281px;width:63px;color:#222">E</div>
<div class="hc" style="left:345px;width:63px;color:#222">F</div>
<div class="hc" style="left:409px;width:63px;color:#222">G</div>
<div class="hc" style="left:473px;width:63px;color:#222">H</div>
<div class="hc" style="left:537px;width:63px;color:#222">I</div>
<div class="hc" style="left:601px;width:63px;color:#222">J</div>
<div class="hc" style="left:665px;width:63px;color:#222">K</div>
<div class="hc" style="left:729px;width:63px;color:#222">L</div>
<div class="hc" style="left:793px;width:63px;color:#222">M</div>
<div class="hc" style="left:857px;width:63px;color:#222">N</div>
<div class="hc" style="left:921px;width:63px;color:#222">O</div>
<div class="hc" style="left:985px;width:63px;color:#222">P</div>
<div class="hc" style="left:1049px;width:63px;color:#222">Q</div>
<div class="hc" style="left:1113px;width:63px;color:#222">R</div>
<div class="hc" style="left:1177px;width:63px;color:#222">S</div>
<div class="hc" style="left:1241px;width:63px;color:#222">T</div>
<div class="hc" style="left:1305px;width:64px;color:#217346">U</div>
<div class="rn" style="top:206px;color:#222;">2</div>
<div class="rn" style="top:226px;color:#222;">3</div>
<div class="rn" style="top:246px;color:#222;">4</div>
<div class="rn" style="top:266px;color:#222;">5</div>
<div class="rn" style="top:286px;color:#222;">6</div>
<div class="rn" style="top:306px;color:#222;">7</div>
<div class="rn" style="top:326px;color:#222;">8</div>
<div class="rn" style="top:346px;color:#222;">9</div>
<div class="rn" style="top:366px;color:#222;font-size:12.5px;letter-spacing:-0.4px;">10</div>
<div class="rn" style="top:386px;color:#222;font-size:12.5px;letter-spacing:-0.4px;">11</div>
<div class="rn" style="top:406px;color:#222;font-size:12.5px;letter-spacing:-0.4px;">12</div>
<div class="rn" style="top:426px;color:#222;font-size:12.5px;letter-spacing:-0.4px;">13</div>
<div class="rn" style="top:446px;color:#222;font-size:12.5px;letter-spacing:-0.4px;">14</div>
<div class="rn" style="top:466px;color:#222;font-size:12.5px;letter-spacing:-0.4px;">15</div>
<div class="rn" style="top:486px;color:#222;font-size:12.5px;letter-spacing:-0.4px;">16</div>
<div class="rn" style="top:506px;color:#222;font-size:12.5px;letter-spacing:-0.4px;">17</div>
<div class="rn" style="top:526px;color:#222;font-size:12.5px;letter-spacing:-0.4px;">18</div>
<div class="rn" style="top:546px;color:#222;font-size:12.5px;letter-spacing:-0.4px;">19</div>
<div class="rn" style="top:566px;color:#222;font-size:12.5px;letter-spacing:-0.4px;">20</div>
<div class="rn" style="top:586px;color:#222;font-size:12.5px;letter-spacing:-0.4px;">21</div>
<div class="rn" style="top:606px;color:#222;font-size:12.5px;letter-spacing:-0.4px;">22</div>
<div class="rn" style="top:626px;color:#217346;font-size:12.5px;letter-spacing:-0.4px;">23</div>
<div class="a" style="left:88px;top:206px;width:1px;height:19px;background:#fff"></div>
<div class="a" style="left:88px;top:306px;width:1px;height:19px;background:#fff"></div>
<div class="t" style="left:26.7px;top:208px;font-size:13.5px;line-height:18px;letter-spacing:-0.04px;color:#000;font-weight:normal;font-style:normal;">Chocolate IceCream</div>
<div class="t" style="left:47.2px;top:308px;font-size:13.5px;line-height:18px;letter-spacing:0.06px;color:#000;font-weight:normal;font-style:normal;">Vanilla Cones</div>
<div class="t" style="left:26.7px;top:228px;font-size:13.5px;line-height:18px;letter-spacing:0.47px;color:#000;font-weight:normal;font-style:normal;">Men</div>
<div class="t" style="left:26.7px;top:248px;font-size:13.5px;line-height:18px;letter-spacing:0.43px;color:#000;font-weight:normal;font-style:normal;">Women</div>
<div class="t" style="left:26.7px;top:268px;font-size:13.5px;line-height:18px;letter-spacing:0.25px;color:#000;font-weight:normal;font-style:normal;">Children</div>
<div class="t" style="left:26.7px;top:328px;font-size:13.5px;line-height:18px;letter-spacing:0.47px;color:#000;font-weight:normal;font-style:normal;">Men</div>
<div class="t" style="left:26.7px;top:348px;font-size:13.5px;line-height:18px;letter-spacing:0.43px;color:#000;font-weight:normal;font-style:normal;">Women</div>
<div class="t" style="left:26.7px;top:368px;font-size:13.5px;line-height:18px;letter-spacing:0.25px;color:#000;font-weight:normal;font-style:normal;">Children</div>
<div class="t" style="left:125.1px;top:229px;font-size:12.5px;line-height:16px;letter-spacing:-0.41px;color:#000;font-weight:normal;font-style:normal;">12%</div>
<div class="t" style="left:125.1px;top:249px;font-size:12.5px;line-height:16px;letter-spacing:-0.41px;color:#000;font-weight:normal;font-style:normal;">42%</div>
<div class="t" style="left:125.1px;top:269px;font-size:12.5px;line-height:16px;letter-spacing:-0.41px;color:#000;font-weight:normal;font-style:normal;">35%</div>
<div class="t" style="left:125.1px;top:329px;font-size:12.5px;line-height:16px;letter-spacing:-0.41px;color:#000;font-weight:normal;font-style:normal;">20%</div>
<div class="t" style="left:125.1px;top:349px;font-size:12.5px;line-height:16px;letter-spacing:-0.41px;color:#000;font-weight:normal;font-style:normal;">30%</div>
<div class="t" style="left:125.1px;top:369px;font-size:12.5px;line-height:16px;letter-spacing:-0.41px;color:#000;font-weight:normal;font-style:normal;">50%</div>
<svg class="a" style="left:8px;top:189px" width="14" height="14"><path d="M13 1.500V13H1.500Z" fill="#b4b4b4"/></svg>
<div class="a" style="left:1303px;top:624px;width:41px;height:22px;border:2px solid #217346;border-right-width:1px;border-bottom-width:1px"></div>
<div class="a" style="left:456px;top:291px;width:481px;height:289px;background:#fff;border:1px solid #d9d9d9"></div>
<div class="a" style="left:573px;top:340px;width:1px;height:208px;background:#d9d9d9"></div>
<div class="a" style="left:630px;top:340px;width:1px;height:208px;background:#d9d9d9"></div>
<div class="a" style="left:687px;top:340px;width:1px;height:208px;background:#d9d9d9"></div>
<div class="a" style="left:743px;top:340px;width:1px;height:208px;background:#d9d9d9"></div>
<div class="a" style="left:800px;top:340px;width:1px;height:208px;background:#d9d9d9"></div>
<div class="a" style="left:857px;top:340px;width:1px;height:208px;background:#d9d9d9"></div>
<div class="a" style="left:913px;top:340px;width:1px;height:208px;background:#d9d9d9"></div>
<div class="a" style="left:574px;top:348px;width:283px;height:8px;background:#5b9bd5"></div>
<div class="t" style="left:521.1px;top:344px;font-size:11px;line-height:15px;letter-spacing:-0.05px;color:#595959;font-weight:normal;font-style:normal;">Children</div>
<div class="a" style="left:574px;top:371px;width:170px;height:8px;background:#5b9bd5"></div>
<div class="t" style="left:523.2px;top:367px;font-size:11px;line-height:15px;letter-spacing:0.20px;color:#595959;font-weight:normal;font-style:normal;">Women</div>
<div class="a" style="left:574px;top:394px;width:113px;height:8px;background:#5b9bd5"></div>
<div class="t" style="left:537.2px;top:390px;font-size:11px;line-height:15px;letter-spacing:0.05px;color:#595959;font-weight:normal;font-style:normal;">Men</div>
<div class="t" style="left:496.8px;top:413px;font-size:11px;line-height:15px;letter-spacing:-0.18px;color:#595959;font-weight:normal;font-style:normal;">Vanilla Cones</div>
<div class="a" style="left:574px;top:463px;width:198px;height:8px;background:#5b9bd5"></div>
<div class="t" style="left:521.1px;top:459px;font-size:11px;line-height:15px;letter-spacing:-0.05px;color:#595959;font-weight:normal;font-style:normal;">Children</div>
<div class="a" style="left:574px;top:486px;width:238px;height:8px;background:#5b9bd5"></div>
<div class="t" style="left:520.9px;top:482px;font-size:11px;line-height:15px;letter-spacing:0.23px;color:#595959;font-weight:normal;font-style:normal;">Women</div>
<div class="a" style="left:574px;top:509px;width:68px;height:8px;background:#5b9bd5"></div>
<div class="t" style="left:537.2px;top:505px;font-size:11px;line-height:15px;letter-spacing:0.05px;color:#595959;font-weight:normal;font-style:normal;">Men</div>
<div class="t" style="left:464.1px;top:529px;font-size:11px;line-height:15px;letter-spacing:-0.16px;color:#595959;font-weight:normal;font-style:normal;">Chocolate IceCream</div>
<div class="t" style="left:570.5px;top:557px;font-size:11px;line-height:15px;letter-spacing:-0.72px;color:#595959;font-weight:normal;font-style:normal;">0</div>
<div class="t" style="left:622.6px;top:557px;font-size:11px;line-height:15px;letter-spacing:-0.35px;color:#595959;font-weight:normal;font-style:normal;">0.1</div>
<div class="t" style="left:679.2px;top:557px;font-size:11px;line-height:15px;letter-spacing:-0.35px;color:#595959;font-weight:normal;font-style:normal;">0.2</div>
<div class="t" style="left:735.9px;top:557px;font-size:11px;line-height:15px;letter-spacing:-0.35px;color:#595959;font-weight:normal;font-style:normal;">0.3</div>
<div class="t" style="left:792.6px;top:557px;font-size:11px;line-height:15px;letter-spacing:-0.35px;color:#595959;font-weight:normal;font-style:normal;">0.4</div>
<div class="t" style="left:849.3px;top:557px;font-size:11px;line-height:15px;letter-spacing:-0.35px;color:#595959;font-weight:normal;font-style:normal;">0.5</div>
<div class="t" style="left:905.9px;top:557px;font-size:11px;line-height:15px;letter-spacing:-0.35px;color:#595959;font-weight:normal;font-style:normal;">0.6</div>
<div class="t" style="left:630.5px;top:303px;font-size:17px;line-height:21px;letter-spacing:-0.40px;color:#595959;font-weight:normal;font-style:normal;">Ice Cream Survey</div>
<div class="a" style="left:0;top:646px;width:1344px;height:1px;background:#ababab"></div>
<div class="a" style="left:1343px;top:206px;width:1px;height:441px;background:#ababab"></div>
<div class="a" style="left:0;top:647px;width:1364px;height:27px;background:#e6e6e6"></div>
<div class="a" style="left:99px;top:646px;width:65px;height:23px;background:#fff;border-left:1px solid #bdbdbd;border-right:1px solid #bdbdbd"></div>
<div class="a" style="left:99px;top:669px;width:65px;height:2px;background:#217346"></div>
<div class="t" style="left:110.5px;top:651px;font-size:13.5px;line-height:18px;letter-spacing:-0.80px;color:#217346;font-weight:bold;font-style:normal;">Sheet1</div>
<svg class="a" style="left:24px;top:654px" width="40" height="12" viewBox="0 0 40 12"><path d="M7.200 1.500L2.500 5.500L7.200 9.500ZM30.500 1.500L35.200 5.500L30.500 9.500Z" fill="#c2c2c2"/></svg>
<svg class="a" style="left:195px;top:650px" width="20" height="20" viewBox="0 0 20 20"><circle cx="10" cy="9.800" r="7.700" fill="none" stroke="#777" stroke-width="1.100"/><path d="M6.300 9.800H13.700M10 6.100V13.500" stroke="#555" stroke-width="1.800"/></svg>
<div class="a" style="left:818px;top:655px;width:2px;height:2px;background:#a6a6a6;box-shadow:0 4px 0 #a6a6a6,0 8px 0 #a6a6a6"></div>
<div class="a" style="left:835px;top:653px;width:15px;height:15px;background:#fff;border:1px solid #c6c6c6"></div>
<div class="a" style="left:849px;top:653px;width:456px;height:15px;background:#fff;border:1px solid #ababab"></div>
<div class="a" style="left:1305px;top:653px;width:24px;height:15px;background:#dcdcdc"></div>
<div class="a" style="left:1329px;top:653px;width:15px;height:15px;background:#fff;border:1px solid #c6c6c6"></div>
<svg class="a" style="left:835px;top:653px" width="15" height="15"><path d="M9.500 3.800L5.700 7.500L9.500 11.200Z" fill="#6a6a6a"/></svg>
<svg class="a" style="left:1329px;top:653px" width="15" height="15"><path d="M5.500 3.800L9.300 7.500L5.500 11.200Z" fill="#6a6a6a"/></svg>
<div class="a" style="left:1347px;top:188px;width:15px;height:458px;background:#dcdcdc"></div>
<div class="a" style="left:1347px;top:188px;width:15px;height:15px;background:#fff;border:1px solid #c6c6c6"></div>
<div class="a" style="left:1347px;top:223px;width:15px;height:409px;background:#fff;border:1px solid #ababab"></div>
<div class="a" style="left:1347px;top:632px;width:15px;height:15px;background:#fff;border:1px solid #c6c6c6"></div>
<svg class="a" style="left:1347px;top:188px" width="15" height="15"><path d="M3.5 9.5L7.5 5.5L11.5 9.5Z" fill="#606060"/></svg>
<svg class="a" style="left:1347px;top:632px" width="15" height="15"><path d="M3.5 5.5L7.5 9.5L11.5 5.5Z" fill="#606060"/></svg>
<div class="a" style="left:0;top:674px;width:1364px;height:1px;background:#c6c6c6"></div>
<div class="a" style="left:0;top:675px;width:1364px;height:21px;background:#f1f1f1"></div>
<div class="a" style="left:0;top:696px;width:1364px;height:2px;background:#111"></div>
<div class="t" style="left:5.8px;top:677px;font-size:11.5px;line-height:16px;letter-spacing:-0.64px;color:#444;font-weight:normal;font-style:normal;">Ready</div>
<div class="t" style="left:55.5px;top:677px;font-size:11.5px;line-height:16px;letter-spacing:-0.22px;color:#444;font-weight:normal;font-style:normal;">Scroll Lock</div>
<div class="a" style="left:1073px;top:675px;width:38px;height:21px;background:#c8c8c8"></div>
<svg class="a" style="left:1084px;top:678px" width="14" height="14" viewBox="0 0 14 14"><path d="M1 1H13V13H1ZM1 5H13M1 9H13M5 1V13M9 1V13" fill="none" stroke="#555" stroke-width="1"/></svg>
<svg class="a" style="left:1123px;top:678px" width="14" height="14" viewBox="0 0 14 14"><path d="M0.5 0.5H13.5V13.5H0.5Z M3.5 3.5H10.5V10.5H3.5Z M5 5.5H9M5 7H9M5 8.5H9" fill="none" stroke="#555" stroke-width="1"/></svg>
<svg class="a" style="left:1161px;top:678px" width="14" height="14" viewBox="0 0 14 14"><path d="M0.5 0.5H13.5V13.5H0.5Z M4.5 0.5V7.5H0.5 M8.5 0.5V7.5H4.5" fill="none" stroke="#555" stroke-width="1"/></svg>
<div class="a" style="left:1192px;top:684px;width:6px;height:2px;background:#444"></div>
<div class="a" style="left:1202px;top:684px;width:100px;height:1px;background:#a0a0a0"></div>
<div class="a" style="left:1250px;top:679px;width:4px;height:11px;background:#555"></div>
<div class="a" style="left:1306px;top:684px;width:8px;height:2px;background:#444"></div>
<div class="a" style="left:1309px;top:681px;width:2px;height:8px;background:#444"></div>
<div class="t" style="left:1329.5px;top:677px;font-size:11.5px;line-height:16px;letter-spacing:-0.80px;color:#444;font-weight:normal;font-style:normal;">100%</div>
</body></html>
